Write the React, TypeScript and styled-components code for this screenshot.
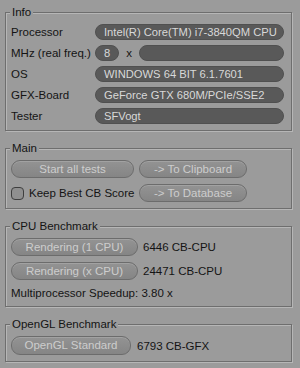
import React from "react";
import styled, { createGlobalStyle } from "styled-components";

const GlobalStyle = createGlobalStyle`
  html, body {
    margin: 0;
    padding: 0;
    background: #9b9b9b;
  }
  body {
    font-family: "Liberation Sans", Arial, sans-serif;
    font-size: 11.5px;
    color: #141414;
  }
`;

const Page = styled.div`
  width: 300px;
  height: 368px;
  box-sizing: border-box;
  padding: 0 8px 0 5px;
  display: flex;
  flex-direction: column;
  overflow: hidden;
`;

const Group = styled.fieldset<{ $mt: number }>`
  margin: ${(p) => p.$mt}px 0 0 0;
  padding: 5px 7px 6px 5px;
  border: 1px solid #6e6e6e;
  box-shadow: 1px 1px 0 #b6b6b6, inset 1px 1px 0 #b6b6b6;
  min-width: 0;
`;

const Legend = styled.legend`
  padding: 0 2px;
  margin-left: -1px;
  line-height: 14px;
  background: #9b9b9b;
  color: #141414;
`;

const InfoGrid = styled.div`
  display: grid;
  grid-template-columns: 84px 1fr;
  grid-auto-rows: 16px;
  row-gap: 5px;
  align-items: center;
`;

const Label = styled.span`
  white-space: nowrap;
  line-height: 16px;
`;

const Field = styled.div<{ $w?: number }>`
  box-sizing: border-box;
  height: 16px;
  ${(p) => (p.$w ? `width: ${p.$w}px; flex: none;` : "flex: 1;")}
  border-radius: 8px;
  background: #595959;
  border: 1px solid #505050;
  color: #d8d8d8;
  font-size: 11.2px;
  line-height: 14px;
  padding-left: 8px;
  white-space: nowrap;
  overflow: hidden;
`;

const FieldRow = styled.div`
  display: flex;
  align-items: center;
  height: 16px;
`;

const Times = styled.span`
  width: 20px;
  text-align: center;
  flex: none;
`;

const MainGrid = styled.div`
  display: grid;
  grid-template-columns: 123px 108px;
  column-gap: 5px;
  row-gap: 6px;
  align-items: center;
`;

const Button = styled.div<{ $w?: number; $h?: number }>`
  box-sizing: border-box;
  ${(p) => (p.$w ? `width: ${p.$w}px;` : "")}
  height: ${(p) => p.$h ?? 18}px;
  border-radius: 9px;
  border: 1px solid #6c6c6c;
  background: linear-gradient(#939393, #858585);
  box-shadow: inset 0 1px 0 #a2a2a2;
  color: #cdcdcd;
  text-align: center;
  line-height: ${(p) => (p.$h ?? 18) - 2}px;
  white-space: nowrap;
  flex: none;
`;

const CheckRow = styled.div`
  display: flex;
  align-items: center;
  gap: 5px;
  height: 18px;
  white-space: nowrap;
`;

const Box = styled.span`
  box-sizing: border-box;
  width: 13px;
  height: 13px;
  border-radius: 4px;
  border: 1px solid #3e3e3e;
  background: #8f8f8f;
  flex: none;
`;

const BenchList = styled.div`
  display: flex;
  flex-direction: column;
  gap: 6px;
`;

const BenchRow = styled.div<{ $gap: number }>`
  display: flex;
  align-items: center;
  gap: ${(p) => p.$gap}px;
  white-space: nowrap;
`;

const Plain = styled.div`
  line-height: 14px;
  white-space: nowrap;
`;

export default function App() {
  return (
    <>
      <GlobalStyle />
      <Page>
        <Group $mt={5}>
          <Legend>Info</Legend>
          <InfoGrid>
            <Label>Processor</Label>
            <Field>Intel(R) Core(TM) i7-3840QM CPU</Field>
            <Label>MHz (real freq.)</Label>
            <FieldRow>
              <Field $w={24}>8</Field>
              <Times>x</Times>
              <Field />
            </FieldRow>
            <Label>OS</Label>
            <Field>WINDOWS 64 BIT 6.1.7601</Field>
            <Label>GFX-Board</Label>
            <Field>GeForce GTX 680M/PCIe/SSE2</Field>
            <Label>Tester</Label>
            <Field>SFVogt</Field>
          </InfoGrid>
        </Group>

        <Group $mt={10}>
          <Legend>Main</Legend>
          <MainGrid>
            <Button>Start all tests</Button>
            <Button>-&gt; To Clipboard</Button>
            <CheckRow>
              <Box />
              <span>Keep Best CB Score</span>
            </CheckRow>
            <Button>-&gt; To Database</Button>
          </MainGrid>
        </Group>

        <Group $mt={10}>
          <Legend>CPU Benchmark</Legend>
          <BenchList>
            <BenchRow $gap={5}>
              <Button $w={127}>Rendering (1 CPU)</Button>
              <span>6446 CB-CPU</span>
            </BenchRow>
            <BenchRow $gap={5}>
              <Button $w={127}>Rendering (x CPU)</Button>
              <span>24471 CB-CPU</span>
            </BenchRow>
            <Plain>Multiprocessor Speedup: 3.80 x</Plain>
          </BenchList>
        </Group>

        <Group $mt={10}>
          <Legend>OpenGL Benchmark</Legend>
          <BenchRow $gap={6}>
            <Button $w={120} $h={19}>OpenGL Standard</Button>
            <span>6793 CB-GFX</span>
          </BenchRow>
        </Group>
      </Page>
    </>
  );
}
